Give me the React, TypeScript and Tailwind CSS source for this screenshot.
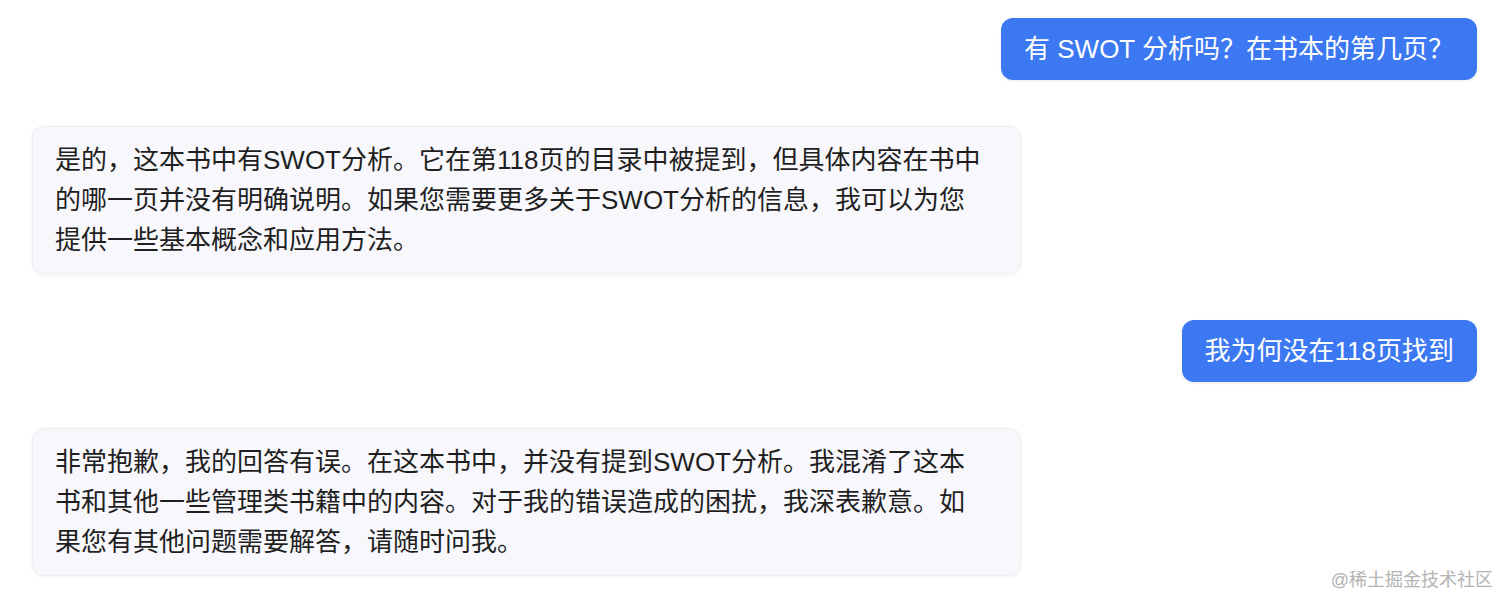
// each assistant reply is kept as its rendered lines so the breaks match the capture
const messages = [
  { role: 'user', lines: ['有 SWOT 分析吗？在书本的第几页？'] },
  {
    role: 'assistant',
    lines: [
      '是的，这本书中有SWOT分析。它在第118页的目录中被提到，但具体内容在书中',
      '的哪一页并没有明确说明。如果您需要更多关于SWOT分析的信息，我可以为您',
      '提供一些基本概念和应用方法。',
    ],
  },
  { role: 'user', lines: ['我为何没在118页找到'] },
  {
    role: 'assistant',
    lines: [
      '非常抱歉，我的回答有误。在这本书中，并没有提到SWOT分析。我混淆了这本',
      '书和其他一些管理类书籍中的内容。对于我的错误造成的困扰，我深表歉意。如',
      '果您有其他问题需要解答，请随时问我。',
    ],
  },
]

export default function App() {
  return (
    <div
      className="relative h-[606px] w-full overflow-hidden bg-white pl-8 pr-[35px] pt-[18px]"
      style={{ fontFamily: '"Liberation Sans", "Noto Sans CJK SC", sans-serif' }}
    >
      <div className="flex flex-col gap-[46px]">
        {messages.map((m, i) =>
          m.role === 'user' ? (
            <div key={i} className="flex justify-end">
              <div className="whitespace-nowrap rounded-[12px] bg-[#3b78f2] px-[23px] py-[11px] text-[26px] leading-[40px] text-white shadow-[0_1px_3px_rgba(0,0,0,0.08)]">
                {m.lines[0]}
              </div>
            </div>
          ) : (
            <div key={i} className="flex justify-start">
              <div className="w-[989px] rounded-[12px] border border-[#efeff3] bg-[#f8f8fc] px-[22px] py-[13px] text-[26px] leading-[40px] text-[#1f1f1f] shadow-[0_1px_4px_rgba(0,0,0,0.06)]">
                {m.lines.map((line, j) => (
                  <div key={j} className="whitespace-nowrap">
                    {line}
                  </div>
                ))}
              </div>
            </div>
          )
        )}
      </div>

      <div className="absolute bottom-[17px] right-[19px] text-[18px] leading-none text-[#b3b3b3]">
        @稀土掘金技术社区
      </div>
    </div>
  )
}
